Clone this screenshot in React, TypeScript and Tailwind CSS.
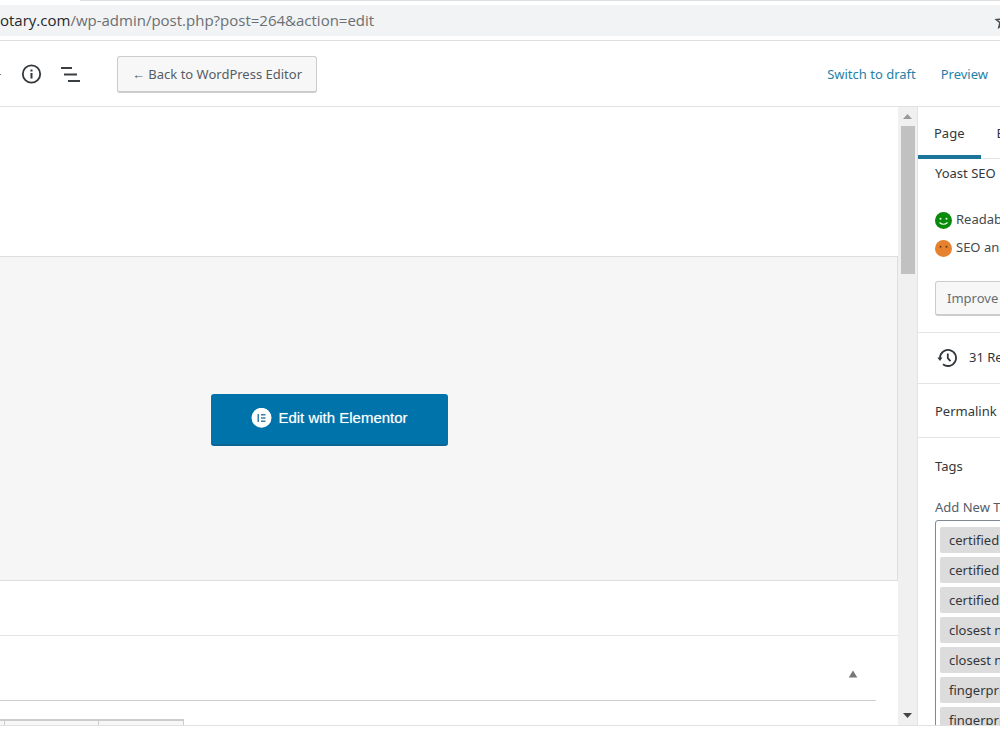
import { useState } from "react"

const tags = [
  "certified notary",
  "certified notary near me",
  "certified signing agent",
  "closest notary",
  "closest notary to me",
  "fingerprinting",
  "fingerprinting near me",
]

function AddressBar() {
  return (
    <div className="border-b border-[#dcdddf] pb-1">
      <div className="ml-20 h-px bg-[#dcdddf]" />
      <div className="mt-1 flex h-[31px] items-center justify-between bg-[#f1f3f4]">
        <div className="whitespace-nowrap font-['Open_Sans','Noto_Sans',sans-serif] text-[15px] text-[#6b6f73]">
          <span className="text-[#26282b]">otary.com</span>/wp-admin/post.php?post=264&amp;action=edit
        </div>
        <button type="button" aria-label="Bookmark this page" className="-mr-3">
          <svg width="18" height="18" viewBox="0 0 24 24" fill="none" stroke="#4a4d51" strokeWidth="2">
            <path d="M12 3.5l2.6 6 6.4.6-4.9 4.2 1.5 6.3-5.6-3.4-5.6 3.4 1.5-6.3L3 10.100l6.400-.6z" />
          </svg>
        </button>
      </div>
    </div>
  )
}

function EditorHeader() {
  return (
    <header className="flex h-[66px] items-center border-b border-[#dfe1e3] pt-[2px]">
      <div className="h-px w-px bg-[#777]" />
      <button type="button" aria-label="Content structure" className="ml-5">
        <svg width="21" height="21" viewBox="0 0 21 21" fill="none" stroke="#33373b">
          <circle cx="10.500" cy="10" r="8.700" strokeWidth="1.800" />
          <path d="M10.500 9v5.500" strokeWidth="2" />
          <path d="M10.500 5.500v2" strokeWidth="2" />
        </svg>
      </button>
      <button type="button" aria-label="Block navigation" className="ml-[18px]">
        <svg width="21" height="18" viewBox="0 0 21 18" fill="#3a3e42">
          <path d="M1 1h11v2H1zM4 7.500h13v2H4zM8 14h12v2H8z" />
        </svg>
      </button>
      <button
        type="button"
        className="ml-9 h-[37px] w-[200px] rounded-[3px] border border-b-2 border-[#cccccc] bg-[#f7f7f7] pt-[2px] text-[13px] text-[#555d66]"
      >
        ← Back to WordPress Editor
      </button>
      <div className="ml-auto flex gap-[25px] pr-3 text-[13px] text-[#1f81a8]">
        <button type="button">Switch to draft</button>
        <button type="button">Preview</button>
      </div>
    </header>
  )
}

function ElementorIcon() {
  return (
    <svg width="21" height="21" viewBox="0 0 21 21">
      <circle cx="10.500" cy="9.800" r="10" fill="#fff" />
      <path d="M6.500 6h1.500v8H6.500zM10 6h4.500v1.500H10zM10 9.300h4.500v1.500H10zM10 12.500h4.500v1.500H10z" fill="#3c7fa6" />
    </svg>
  )
}

function Canvas() {
  return (
    <main className="min-w-0 flex-1 overflow-hidden">
      <div className="h-[149px]" />
      <section className="flex h-[325px] items-center border border-l-0 border-[#dcdfe1] bg-[#f6f6f6] pl-[211px] pt-[2px]">
        <button
          type="button"
          className="flex h-[52px] w-[237px] items-center justify-center gap-[6px] rounded-[3px] border-b-2 border-[#0a6595] bg-[#0073aa] font-['Liberation_Sans',Arial,sans-serif] text-[15px] text-white [text-shadow:0_0_1px_#ffffff80]"
        >
          <ElementorIcon />
          <span>Edit with Elementor</span>
        </button>
      </section>
      <div className="h-[54px]" />
      <section className="border-t border-[#e2e4e7]">
        <div className="mr-[22px] flex h-[65px] items-center justify-end border-b border-[#ccced0] pr-[18px]">
          <button type="button" aria-label="Toggle panel" className="mt-3">
            <svg width="10" height="8" viewBox="0 0 10 8" fill="#777">
              <path d="M5 0.500L9.300 7.500H0.700z" />
            </svg>
          </button>
        </div>
        <div className="mt-[18px] flex h-10">
          <div className="w-[5px] border-r border-t-2 border-[#cccccc] bg-[#f7f7f7]" />
          <div className="w-[94px] border-r border-t-2 border-[#cccccc] bg-[#f7f7f7]" />
          <div className="w-[85px] border-r border-t-2 border-[#cccccc] bg-[#f7f7f7]" />
        </div>
      </section>
    </main>
  )
}

function Scrollbar() {
  return (
    <div className="flex w-[19px] shrink-0 flex-col items-center bg-[#f0f0f0]">
      <svg className="my-[7px]" width="9" height="5" viewBox="0 0 9 5" fill="#9a9a9a">
        <path d="M4.500 0L9 5H0z" />
      </svg>
      <div className="h-[148px] w-[14px] bg-[#c1c1c1]" />
      <svg className="mt-auto mb-[7px]" width="9" height="5" viewBox="0 0 9 5" fill="#444">
        <path d="M4.500 5L0 0h9z" />
      </svg>
    </div>
  )
}

function Face({ good }: { good?: boolean }) {
  return (
    <svg className="shrink-0" width="17" height="17" viewBox="0 0 17 17">
      <circle cx="8.500" cy="8.500" r="8.500" fill={good ? "#0a8a0a" : "#e6812e"} />
      <circle cx="5.500" cy="6.800" r="1" fill={good ? "#e9ffe9" : "#6b3a12"} />
      <circle cx="11.500" cy="6.800" r="1" fill={good ? "#e9ffe9" : "#6b3a12"} />
      {good && <path d="M4.500 10.500q4 3.500 8 0" fill="none" stroke="#e9ffe9" strokeWidth="1.200" />}
    </svg>
  )
}

function Sidebar() {
  const [tab, setTab] = useState("Page")

  return (
    <aside className="w-[83px] shrink-0 overflow-hidden whitespace-nowrap border-l border-[#e2e4e7] text-[13px] text-[#32373c]">
      <div className="flex h-[52px] border-b border-[#e2e4e7]">
        {["Page", "Block"].map((name) => (
          <button
            key={name}
            type="button"
            onClick={() => setTab(name)}
            className={`-mb-px shrink-0 border-b-4 px-4 pt-[6px] ${tab === name ? "border-[#1a7599]" : "border-transparent"}`}
          >
            {name}
          </button>
        ))}
      </div>

      <section className="h-[174px] border-b border-[#e2e4e7] pl-[17px] pt-1">
        <h2 className="leading-5">Yoast SEO</h2>
        <p className="mt-7 flex h-[18px] items-center gap-1 text-[#44494e]">
          <Face good />
          Readability analysis: Good
        </p>
        <p className="mt-[10px] flex h-[18px] items-center gap-1 text-[#44494e]">
          <Face />
          SEO analysis: OK
        </p>
        <button
          type="button"
          className="mt-6 h-[35px] rounded-[3px] border border-b-2 border-[#cccccc] bg-[#f7f7f7] px-[11px] pt-[2px] text-[#666d74]"
        >
          Improve your post with Yoast
        </button>
      </section>

      <section className="h-[51px] border-b border-[#e2e4e7] pl-[19px]">
        <button type="button" className="flex h-full items-center gap-3">
          <svg className="shrink-0" width="20" height="20" viewBox="0 0 20 20" fill="none" stroke="#32373c" strokeWidth="1.800">
            <path d="M3 10a8 8 0 1 1 3 6.200" />
            <path d="M10.800 5.500v4.700l2.700 3" />
            <path d="M0.300 9.500h5.200L3 13z" fill="#32373c" stroke="none" />
          </svg>
          31 Revisions
        </button>
      </section>

      <section className="h-[54px] border-b border-[#e2e4e7] pl-[17px]">
        <button type="button" className="h-full pt-[2px]">
          Permalink
        </button>
      </section>

      <section className="pl-[17px] pt-[18px]">
        <h2 className="leading-5">Tags</h2>
        <label htmlFor="new-tag" className="mt-[21px] block leading-5 text-[#555d66]">
          Add New Tag
        </label>
        <div className="mt-[3px] w-[246px] rounded-[3px] border border-[#7e8993] p-1 pt-[6px]">
          <ul className="flex flex-col items-start gap-1">
            {tags.map((tag) => (
              <li key={tag} className="h-[26px] rounded-[2px] bg-[#dcdcdc] px-[9px] leading-[26px]">
                {tag}
              </li>
            ))}
          </ul>
          <input id="new-tag" className="mt-1 w-full outline-none" />
        </div>
      </section>
    </aside>
  )
}

export default function App() {
  return (
    <div className="min-h-screen bg-white font-['Noto_Sans','Open_Sans',sans-serif]">
      <AddressBar />
      <EditorHeader />
      <div className="flex h-[619px] overflow-hidden border-b border-[#dfe1e3]">
        <Canvas />
        <Scrollbar />
        <Sidebar />
      </div>
    </div>
  )
}
